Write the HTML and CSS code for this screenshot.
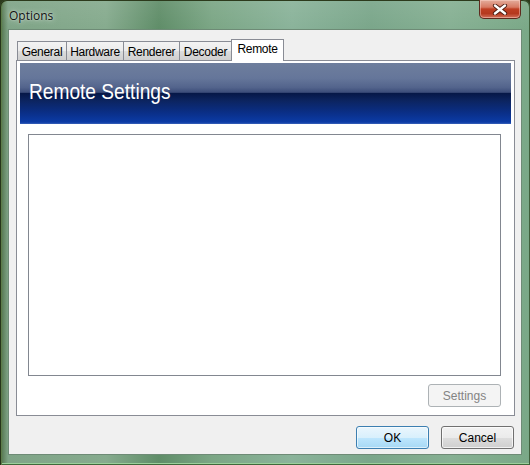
FILE: index.html
```html
<!DOCTYPE html>
<html>
<head>
<meta charset="utf-8">
<link rel="stylesheet" href="styles.css">
</head>
<body>
<div class="window">
  <div class="titlebar">
    <span class="title">Options</span>
    <div class="close">
      <svg width="16" height="11" viewBox="0 0 16 11">
        <path d="M3 1.5 L13 9.5 M13 1.5 L3 9.5" stroke="#4a1a10" stroke-width="4.2" stroke-linecap="round"/>
        <path d="M3 1.5 L13 9.5 M13 1.5 L3 9.5" stroke="#ffffff" stroke-width="2.4" stroke-linecap="round"/>
      </svg>
    </div>
  </div>
  <div class="client">
    <div class="tabs">
      <div class="tab t-general">General</div>
      <div class="tab t-hardware">Hardware</div>
      <div class="tab t-renderer">Renderer</div>
      <div class="tab t-decoder">Decoder</div>
      <div class="tab selected t-remote">Remote</div>
    </div>
    <div class="panel">
      <div class="banner"><span class="banner-title">Remote Settings</span></div>
      <div class="panel-body">
        <div class="listbox"></div>
        <div class="settings-row">
          <div class="btn disabled">Settings</div>
        </div>
      </div>
    </div>
    <div class="dialog-buttons">
      <div class="btn default">OK</div>
      <div class="btn">Cancel</div>
    </div>
  </div>
</div>
</body>
</html>
```

FILE: styles.css
```css
* { box-sizing: border-box; }
html, body { margin: 0; padding: 0; }
body {
  width: 530px;
  height: 465px;
  overflow: hidden;
  background: #2c3a1c;
  font-family: "Liberation Sans", Arial, sans-serif;
}
.window {
  width: 530px;
  height: 465px;
  display: flex;
  flex-direction: column;
  border-radius: 7px 7px 0 0;
  background:
    linear-gradient(180deg, rgba(255,255,255,0.08) 0px, rgba(0,0,0,0) 30px),
    linear-gradient(90deg, #4d6e45 0px, #7fa487 8px, #86ab8e 20%, #5f8d68 30%, #7ba685 40%, #8ab39a 55%, #7aa68a 70%, #86b093 85%, #7aa887 100%);
  box-shadow: inset 1px 0 0 #26351a, inset -1px 0 0 #3e5e3a, inset 0 1px 0 #2c3a1c, inset 2px 0 0 #5d7d4a, inset 0 -1px 0 #3f6a3c, inset 0 -2px 0 #9bcf9b;
  padding: 0 8px 10px 8px;
}
.titlebar {
  height: 29px;
  display: flex;
  align-items: flex-start;
}
.title {
  font-family: "Open Sans", "Liberation Sans", sans-serif;
  font-size: 12px;
  color: #101010;
  margin-top: 7px;
  margin-left: 1px;
  text-shadow: 0 0 6px rgba(255,255,255,0.7), 0 0 2px rgba(255,255,255,0.6);
}
.close {
  margin-left: auto;
  margin-right: 1px;
  width: 42px;
  height: 19px;
  border: 1px solid #5e2a1e;
  border-top: none;
  border-radius: 0 0 5px 5px;
  background: linear-gradient(180deg, #e4ad9c 0%, #d77a63 40%, #bf3f23 50%, #b5391f 75%, #d1705a 100%);
  box-shadow: inset 0 0 0 1px rgba(255,220,210,0.45);
  display: flex;
  align-items: center;
  justify-content: center;
}
.client {
  flex: 1;
  background: #f0f0f0;
  border: 1px solid #6e8b76;
  display: flex;
  flex-direction: column;
  padding: 9px 0 0 0;
}
.tabs {
  display: flex;
  align-items: flex-end;
  margin-left: 8px;
  height: 21px;
  position: relative;
  z-index: 1;
}
.tab {
  height: 19px;
  border: 1px solid #898c95;
  border-bottom: none;
  margin-right: -1px;
  background: linear-gradient(180deg, #f3f3f3 0%, #ebebeb 50%, #dddddd 51%, #cfcfcf 100%);
  font-size: 12px;
  letter-spacing: -0.3px;
  color: #000;
  display: flex;
  align-items: center;
  justify-content: center;
  padding-top: 1px;
}
.t-general { width: 50px; }
.t-hardware { width: 58px; }
.t-renderer { width: 57px; }
.t-decoder { width: 53px; }
.t-remote { width: 53px; }
.tab.selected {
  height: 22px;
  background: #ffffff;
  margin-bottom: -1px;
  padding-bottom: 5px;
}
.panel {
  margin: 0 6px 0 7px;
  border: 1px solid #898c95;
  background: #ffffff;
  padding: 2px 3px 8px 3px;
  display: flex;
  flex-direction: column;
}
.banner {
  height: 61px;
  background: linear-gradient(180deg, #6e7e9d 0%, #65769a 25%, #53648c 40%, #3c4d7a 48%, #061848 50%, #0c2460 62%, #0a2f88 82%, #0b3ba6 97%, #3a62b8 100%);
  display: flex;
  align-items: flex-start;
  padding: 16px 0 0 9px;
}
.banner-title {
  color: #ffffff;
  font-size: 22px;
  line-height: 26px;
  display: inline-block;
  transform: scaleX(0.87);
  transform-origin: left center;
}
.panel-body {
  display: flex;
  flex-direction: column;
  padding: 10px 10px 0 8px;
}
.listbox {
  height: 242px;
  border: 1px solid #828790;
  background: #ffffff;
}
.settings-row {
  display: flex;
  justify-content: flex-end;
  margin-top: 8px;
}
.btn {
  width: 73px;
  height: 23px;
  border: 1px solid #707070;
  border-radius: 3px;
  background: linear-gradient(180deg, #f2f2f2 0%, #ebebeb 50%, #dddddd 51%, #cfcfcf 100%);
  box-shadow: inset 0 0 0 1px rgba(255,255,255,0.7);
  font-size: 12px;
  color: #000;
  display: flex;
  align-items: center;
  justify-content: center;
}
.btn.disabled {
  border-color: #adb2b5;
  background: #f4f4f4;
  box-shadow: none;
  color: #838383;
}
.btn.default {
  border-color: #3c7fb1;
  background: linear-gradient(180deg, #eaf6fd 0%, #d9f0fc 50%, #bee6fd 51%, #a7d9f5 100%);
  box-shadow: inset 0 0 0 1px rgba(255,255,255,0.6);
}
.dialog-buttons {
  display: flex;
  justify-content: flex-end;
  gap: 12px;
  margin-top: 10px;
  padding-right: 7px;
}
```
